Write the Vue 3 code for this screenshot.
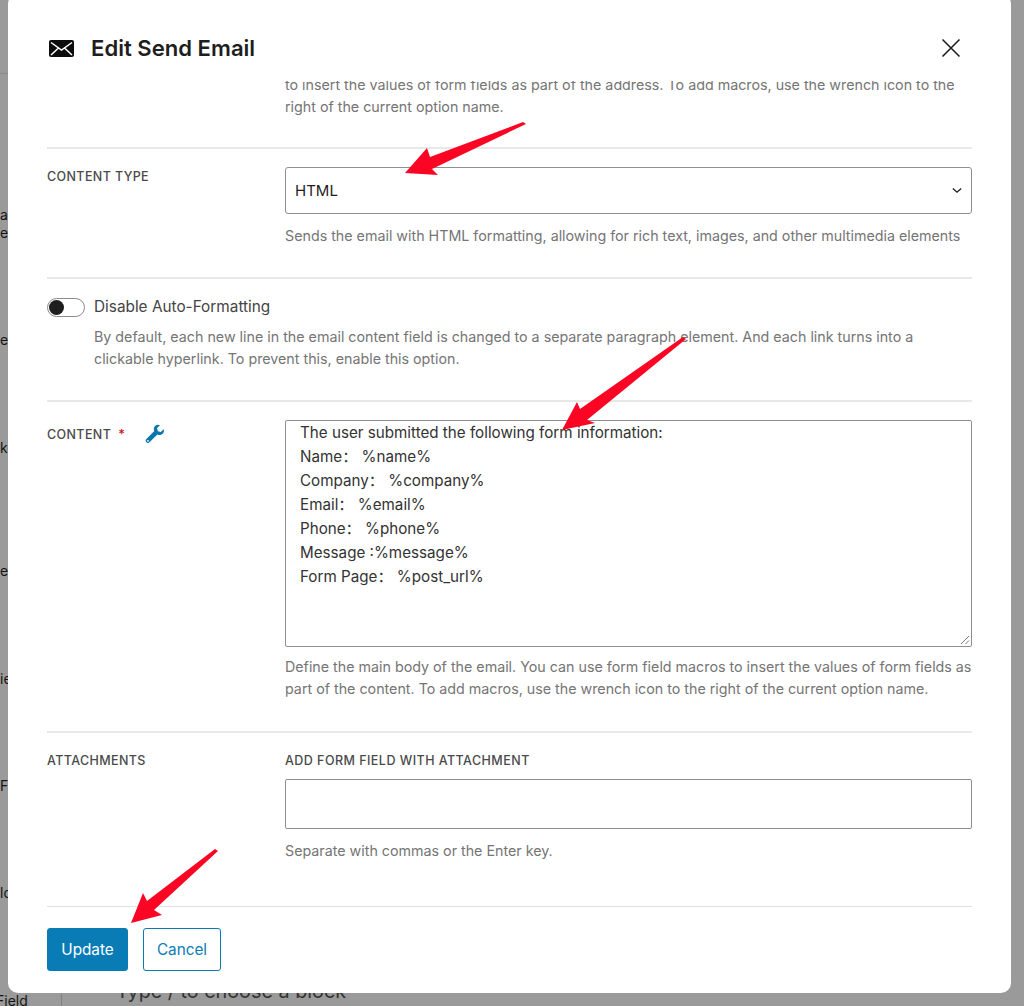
<script setup>
const lines = [
  'The user submitted the following form information:',
  'Name： %name%',
  'Company： %company%',
  'Email： %email%',
  'Phone： %phone%',
  'Message :%message%',
  'Form Page： %post_url%'
]
const peeks = [
  { text: 'a', top: 206 }, { text: 'er', top: 1 }, { text: 'e', top: 90 },
  { text: 'ke', top: 91 }, { text: 'e', top: 106 }, { text: 'ie', top: 91 },
  { text: 'Fi', top: 90 }, { text: 'ld', top: 90 }
]
</script>

<template>
  <div class="page">
    <div class="backdrop">
      <div class="peeks">
        <div v-for="(p, i) in peeks" :key="i" class="peek" :style="{ marginTop: p.top + 'px' }">{{ p.text }}</div>
      </div>
      <div class="rule-top"></div>
      <div class="bottom-field">Field</div>
      <div class="bottom-rule"></div>
      <div class="bottom-hint">Type / to choose a block</div>
    </div>

    <div class="modal">
      <header class="head">
        <svg class="mail" viewBox="0 0 25 17" width="25" height="17">
          <rect x="0" y="0" width="25" height="17" rx="2" fill="#0c0c0c" />
          <path d="M2 2.5 L12.5 10 L23 2.5 M2 15 L9.5 8 M23 15 L15.5 8" fill="none" stroke="#fff" stroke-width="1.5" />
        </svg>
        <h1 class="title">Edit Send Email</h1>
        <svg class="close" viewBox="0 0 20 20" width="20" height="20">
          <path d="M1.5 1.5 L18.5 18.5 M18.5 1.5 L1.5 18.5" fill="none" stroke="#1e1e1e" stroke-width="1.6" />
        </svg>
      </header>

      <div class="scroll">
        <section class="row first">
          <div class="label"></div>
          <p class="help">to insert the values of form fields as part of the address. To add macros, use the wrench icon to the right of the current option name.</p>
        </section>

        <section class="row type">
          <div class="label">CONTENT TYPE</div>
          <div class="field">
            <div class="select">
              <span>HTML</span>
              <svg viewBox="0 0 12 8" width="10" height="7"><path d="M1 1.5 L6 6 L11 1.5" fill="none" stroke="#1e1e1e" stroke-width="1.6" /></svg>
            </div>
            <p class="help one">Sends the email with HTML formatting, allowing for rich text, images, and other multimedia elements</p>
          </div>
        </section>

        <section class="toggle-row">
          <div class="toggle"><span class="knob"></span></div>
          <div>
            <div class="toggle-label">Disable Auto-Formatting</div>
            <p class="help toggle-help">By default, each new line in the email content field is changed to a separate paragraph element. And each link turns into a clickable hyperlink. To prevent this, enable this option.</p>
          </div>
        </section>

        <section class="row content">
          <div class="label content-label">
            <span>CONTENT</span><span class="star">*</span>
            <svg class="wrench" viewBox="0 0 20 20" width="20" height="20">
              <path d="M13.6 0.9 C11 0.6 8.9 2.4 8.8 5 C8.8 5.8 9 6.5 9.3 7.1 L1.4 15 C0.4 16 0.5 17.4 1.3 18.3 C2.2 19.2 3.6 19.2 4.5 18.3 L12.4 10.4 C13.1 10.8 13.9 11 14.7 11 C17.4 10.9 19.3 8.5 18.9 5.7 L18.6 5.2 L15.8 8 L12.9 7.2 L12 4.3 L14.1 2.1 L15.1 1.1 Z" fill="#0b76ab" />
              <circle cx="3" cy="16.8" r="0.9" fill="#fff" />
            </svg>
          </div>
          <div class="field">
            <div class="textarea">
              <div v-for="line in lines" :key="line" class="text-line">{{ line }}</div>
              <svg class="grip" viewBox="0 0 10 10" width="10" height="10"><path d="M1 9 L9 1 M5.5 9 L9 5.5" fill="none" stroke="#777" stroke-width="1" /></svg>
            </div>
            <p class="help two">Define the main body of the email. You can use form field macros to insert the values of form fields as part of the content. To add macros, use the wrench icon to the right of the current option name.</p>
          </div>
        </section>

        <section class="row attach">
          <div class="label attach-label">ATTACHMENTS</div>
          <div class="field">
            <div class="label sub">ADD FORM FIELD WITH ATTACHMENT</div>
            <div class="input"></div>
            <p class="help three">Separate with commas or the Enter key.</p>
          </div>
        </section>
      </div>

      <footer class="foot">
        <button class="btn primary">Update</button>
        <button class="btn ghost">Cancel</button>
      </footer>
    </div>

    <svg class="arrows" viewBox="0 0 1024 1006" width="1024" height="1006">
      <path fill="#fb0525" d="M526 124 L523 122 L430 157 L427 148 L405 173 L438 175 L432 169 Z" />
      <path fill="#fb0525" d="M686 339 L683 337 L580 409 L577 402 L562 430 L595 423 L587 420 Z" />
      <path fill="#fb0525" d="M218 851 L215 849 L147 901 L143 893 L131 923 L162 915 L154 910 Z" />
    </svg>
  </div>
</template>

<style>
html, body { margin: 0; padding: 0; background: #9a9a9a; }
</style>

<style scoped>
.page {
  position: relative;
  width: 1024px;
  height: 1006px;
  overflow: hidden;
  font-family: Inter, "Noto Sans CJK SC", sans-serif;
  background: #9a9a9a;
}
.backdrop { position: absolute; inset: 0; color: #151515; font-size: 14px; }
.peeks { width: 60px; }
.peek { line-height: 17px; }
.rule-top { position: absolute; left: 0; top: 73px; width: 8px; height: 1px; background: #8a8a8a; }
.bottom-field { position: absolute; left: -4px; top: 992px; }
.bottom-rule { position: absolute; left: 61px; top: 994px; width: 1px; height: 12px; background: #808080; }
.bottom-hint { position: absolute; left: 116px; top: 979px; font-size: 19.8px; color: #333; }

.modal {
  position: absolute;
  left: 8px;
  top: -6px;
  width: 1003px;
  height: 999px;
  background: #fff;
  border-radius: 10px;
  display: flex;
  flex-direction: column;
  overflow: hidden;
}
.head {
  height: 81px;
  flex: none;
  padding: 15px 50px 0 41px;
  display: flex;
  align-items: center;
  box-sizing: border-box;
  margin-top: 6px;
}
.mail { flex: none; }
.title { margin: 0 0 0 17px; font-size: 22.1px; font-weight: 600; color: #1e1e1e; flex: 1; }
.close { flex: none; }

.scroll { height: 825px; flex: none; overflow: hidden; padding: 0 39px; box-sizing: border-box; }
.row { display: flex; border-bottom: 2px solid #e8e8e8; }
.label {
  width: 238px; flex: none;
  font-size: 12.5px; font-weight: 500; letter-spacing: 0.38px;
  color: #4a4a4a; line-height: 18px;
}
.field { flex: 1; min-width: 0; }
.help { margin: 0; font-size: 14.27px; line-height: 21.5px; color: #757575; }
.first { height: 75px; margin-top: -7px; box-sizing: border-box; }
.type { height: 130px; padding-top: 18px; box-sizing: border-box; }
.type .label { padding-top: 1px; }
.select {
  height: 47px; box-sizing: border-box;
  border: 1px solid #8c8f94; border-radius: 3px;
  display: flex; align-items: center; justify-content: space-between;
  padding: 0 9px; font-size: 15px; color: #1e1e1e;
}
.one { margin-top: 11px; white-space: nowrap; }

.toggle-row { display: flex; height: 123px; padding-top: 19px; box-sizing: border-box; border-bottom: 2px solid #e8e8e8; }
.toggle {
  width: 38px; height: 19px; box-sizing: border-box; flex: none;
  border: 1px solid #8a8a8a; border-radius: 10px; margin-right: 10px;
  display: flex; align-items: center; padding-left: 1px;
}
.knob { width: 15px; height: 15px; border-radius: 50%; background: #1e1e1e; }
.toggle-label { font-size: 15.35px; line-height: 18px; color: #444; margin-left: -1px; }
.toggle-help { margin-top: 10px; margin-left: -1px; }

.content { height: 331px; padding-top: 18px; box-sizing: border-box; }
.content-label { display: flex; align-items: flex-start; padding-top: 6px; }
.star { color: #cc1818; margin-left: 7px; font-weight: 600; }
.wrench { margin-left: 20px; margin-top: -2px; }
.textarea {
  position: relative;
  height: 227px; box-sizing: border-box;
  border: 1px solid #8c8f94; border-radius: 2px;
  padding: 0 14px; font-size: 15.2px; line-height: 24px; color: #333;
}
.grip { position: absolute; right: 1px; bottom: 1px; }
.two { margin-top: 9px; }

.attach { border-bottom: 0; padding-top: 18px; height: 175px; box-sizing: border-box; }
.attach-label { padding-top: 1px; }
.sub { width: auto; padding-top: 1px; margin-bottom: 9px; letter-spacing: 0.46px; }
.input { height: 50px; box-sizing: border-box; border: 1px solid #8c8f94; border-radius: 2px; }
.three { margin-top: 11px; }

.foot {
  margin: 0 39px;
  height: 87px;
  flex: none;
  border-top: 1px solid #e0e0e0;
  padding-top: 21px;
  box-sizing: border-box;
  display: flex;
  gap: 15px;
  align-items: flex-start;
}
.btn { height: 43px; border-radius: 3px; font-family: inherit; font-size: 15.3px; padding: 0; box-sizing: border-box; }
.primary { width: 81px; background: #0a7cb5; border: 1px solid #0a7cb5; color: #fff; }
.ghost { width: 78px; background: #fff; border: 1px solid #0a7cb5; color: #0a7cb5; }

.arrows { position: absolute; left: 0; top: 0; pointer-events: none; }
</style>
